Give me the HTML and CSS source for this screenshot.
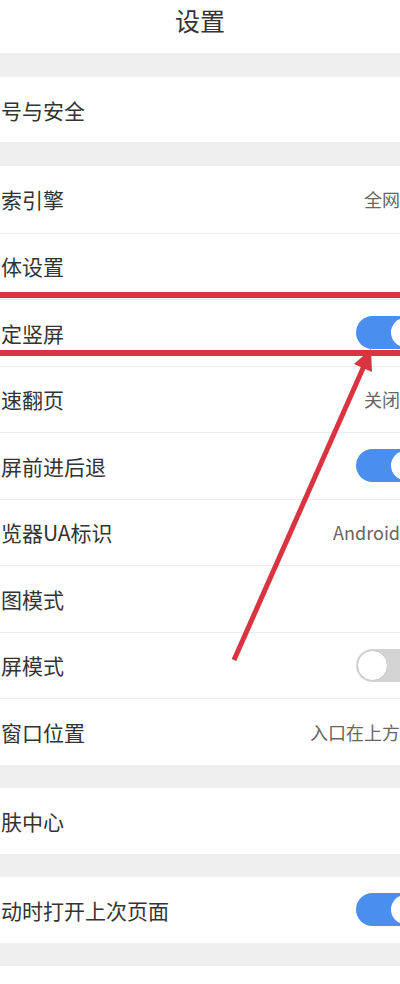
FILE: index.html
```html
<!DOCTYPE html>
<html lang="zh-CN">
<head>
<meta charset="UTF-8">
<meta name="viewport" content="width=device-width, initial-scale=1.0">
<title>设置</title>
<link rel="stylesheet" href="styles.css">
</head>
<body>

<div class="page">
    <header class="topbar">
        <h1>设置</h1>
    </header>

    <section class="group group-first">
        <div class="row row-short"><span class="label">号与安全</span></div>
    </section>

    <section class="group">
        <div class="row"><span class="label">索引擎</span><span class="value">全网</span></div>
        <div class="row"><span class="label">体设置</span></div>
        <div class="row"><span class="label">定竖屏</span><span class="switch on"></span></div>
        <div class="row"><span class="label">速翻页</span><span class="value">关闭</span></div>
        <div class="row"><span class="label">屏前进后退</span><span class="switch on"></span></div>
        <div class="row"><span class="label">览器UA标识</span><span class="value">Android</span></div>
        <div class="row"><span class="label">图模式</span></div>
        <div class="row"><span class="label">屏模式</span><span class="switch"></span></div>
        <div class="row"><span class="label">窗口位置</span><span class="value">入口在上方</span></div>
    </section>

    <section class="group group-small-gap">
        <div class="row row-single"><span class="label">肤中心</span></div>
    </section>

    <section class="group group-small-gap">
        <div class="row row-single"><span class="label">动时打开上次页面</span><span class="switch on"></span></div>
    </section>

    <section class="group group-small-gap">
        <div class="row row-single"></div>
    </section>
</div>

<!-- 红色标注框和箭头 -->
<svg class="marks" width="400" height="984" viewBox="0 0 400 984">
    <rect x="0" y="292" width="400" height="6" fill="#d9343f"/>
    <rect x="0" y="350" width="400" height="6" fill="#d9343f"/>
    <line x1="234" y1="660" x2="364" y2="366" stroke="#d9343f" stroke-width="5"/>
    <polygon points="371,349 354,364 372,372" fill="#d9343f"/>
</svg>

</body>
</html>
```

FILE: styles.css
```css
/* 设置页面 */
body {
    margin: 0;
    padding: 0;
    background-color: #efefef;
    font-family: "Noto Sans CJK SC", "Noto Sans", sans-serif;
    color: #333;
    overflow: hidden;
}

.page {
    width: 400px;
    height: 984px;
    overflow: hidden;
    position: relative;
}

.topbar {
    height: 53px;
    background-color: #fff;
    display: flex;
    align-items: center;
    justify-content: center;
}

.topbar h1 {
    margin: 0;
    font-size: 25px;
    font-weight: normal;
    color: #333;
    line-height: 1;
    padding-bottom: 12px;
}

.group {
    background-color: #fff;
    margin-top: 24px;
}

.group-small-gap {
    margin-top: 23px;
}

.row {
    box-sizing: border-box;
    height: 66.5px;
    display: flex;
    align-items: center;
    justify-content: space-between;
    padding-left: 1px;
    border-top: 1px solid #ececec;
}

.row:first-child {
    border-top: none;
}

.row-short {
    height: 65px;
}

.row-single {
    height: 66px;
}

.label {
    font-size: 21px;
    color: #333;
    white-space: nowrap;
}

.value {
    font-size: 18px;
    color: #666;
    white-space: nowrap;
    margin-right: 0;
}

.switch {
    position: relative;
    width: 66px;
    height: 33px;
    border-radius: 17px;
    background-color: #d4d4d4;
    margin-right: -22px;
    flex-shrink: 0;
}

.switch::after {
    content: "";
    position: absolute;
    top: 1px;
    left: 1px;
    width: 29px;
    height: 29px;
    border-radius: 50%;
    background-color: #fff;
    border: 1px solid #c8c8c8;
}

.switch.on {
    background-color: #4a8ef0;
}

.switch.on::after {
    left: auto;
    right: 2px;
    top: 2px;
    border: none;
}

.marks {
    position: absolute;
    top: 0;
    left: 0;
    pointer-events: none;
}
```
